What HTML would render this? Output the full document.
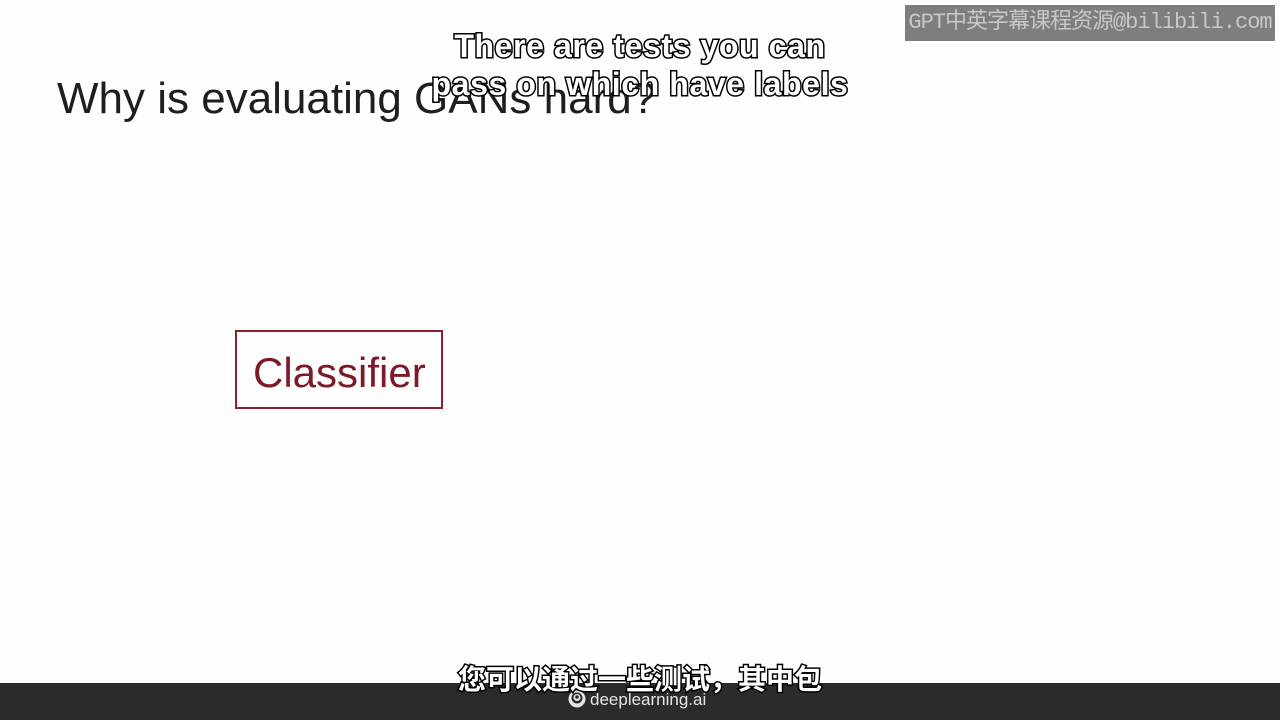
<!DOCTYPE html>
<html><head><meta charset="utf-8"><style>
body{margin:0;width:1280px;height:720px;background:#fefefe;position:relative;overflow:hidden;font-family:"Liberation Sans",sans-serif}
.t{position:absolute;left:57px;top:74px;font-size:44px;color:#1e1e1e;letter-spacing:0px;white-space:nowrap}
.box{position:absolute;left:235px;top:330px;width:204px;height:75px;border:2px solid #8e1f2d;box-sizing:content-box}
.box span{position:absolute;left:16px;top:17px;font-size:42px;color:#7d1a28;letter-spacing:0px}
.sub{position:absolute;left:0;width:1280px;text-align:center;font-size:32px;font-weight:bold;color:#fff;-webkit-text-stroke:3px #000;paint-order:stroke fill;white-space:nowrap;letter-spacing:0.6px}
.wm{position:absolute;left:905px;top:5px;width:370px;height:36px;background:#7f7d7e;color:#c8c6c7;font-size:22px;line-height:36px;text-align:center;font-family:"Liberation Mono","Noto Sans CJK SC",monospace;letter-spacing:-1px}
.bar{position:absolute;left:0;top:683px;width:1280px;height:37px;background:#2b2b2b}
.logo{position:absolute;left:568px;top:690px;color:#e6e6e6;font-size:17px;white-space:nowrap}
.cn{position:absolute;left:0;width:1280px;top:658px;text-align:center;font-size:28px;color:#fff;-webkit-text-stroke:3px #000;paint-order:stroke fill;font-family:"Liberation Sans","Noto Sans CJK SC",sans-serif;font-weight:bold}
</style></head><body>
<div class="wm">GPT中英字幕课程资源@bilibili.com</div>
<div class="t">Why is evaluating GANs hard?</div>
<div class="sub" style="top:28px">There are tests you can</div>
<div class="sub" style="top:66px">pass on which have labels</div>
<div class="box"><span>Classifier</span></div>
<div class="bar"></div>
<div class="logo"><svg width="18" height="18" viewBox="0 0 18 18" style="vertical-align:-3px;margin-right:4px"><circle cx="9" cy="9" r="8.5" fill="#e6e6e6"/><circle cx="9" cy="8" r="5.5" fill="#2b2b2b"/><circle cx="9" cy="7.5" r="3.5" fill="#e6e6e6"/><circle cx="9" cy="7" r="1.8" fill="#2b2b2b"/></svg>deeplearning.ai</div>
<div class="cn">您可以通过一些测试，其中包</div>
</body></html>
